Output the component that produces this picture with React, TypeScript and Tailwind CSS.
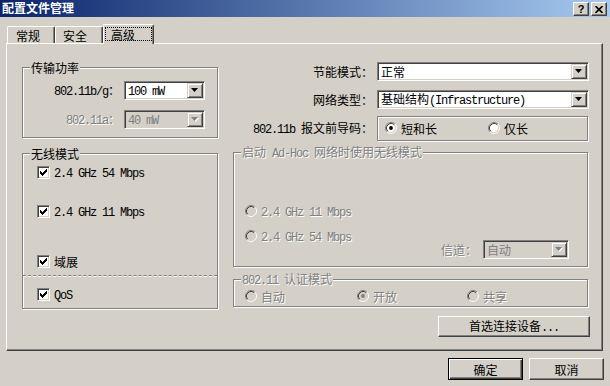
import React from "react";

const CJK = /[\u3000-\u9fff\uff00-\uffef]/;
const RUNS = /[\u3000-\u9fff\uff00-\uffef]+|[^\u3000-\u9fff\uff00-\uffef]+/g;

const DIS = "text-[#808080] [text-shadow:1px_1px_0_#fff]";
const SUNKEN =
  "border border-t-[#808080] border-l-[#808080] border-b-white border-r-white shadow-[inset_1px_1px_0_#404040,inset_-1px_-1px_0_#d4d0c8]";
const RAISED =
  "border border-t-white border-l-white border-b-[#404040] border-r-[#404040] shadow-[inset_-1px_-1px_0_#808080] bg-[#d4d0c8]";
const ETCHED = "border border-[#808080] shadow-[inset_1px_1px_0_#fff,1px_1px_0_#fff]";

function T({ s, className = "" }: { s: string; className?: string }) {
  const parts = s.match(RUNS) || [];
  return (
    <span className={"whitespace-pre leading-[14px] " + className}>
      {parts.map((p, i) =>
        CJK.test(p) ? (
          <span key={i} className="font-['Noto_Sans_CJK_SC',sans-serif] text-[12px]">
            {p}
          </span>
        ) : (
          <span key={i} className="font-['Liberation_Mono',monospace] text-[12px] tracking-[-1.2px]">
            {p}
          </span>
        )
      )}
    </span>
  );
}

function DropBtn({ disabled }: { disabled?: boolean }) {
  return (
    <div className="w-[16px] h-full shrink-0 flex items-center justify-center bg-[#d4d0c8] border border-t-[#d4d0c8] border-l-[#d4d0c8] border-b-[#404040] border-r-[#404040] shadow-[inset_1px_1px_0_#fff,inset_-1px_-1px_0_#808080]">
      <svg width="8" height="5" viewBox="0 0 8 5">
        {disabled && <polygon points="1,1 8,1 4.5,5" fill="#fff" />}
        <polygon points="0,0 7,0 3.5,4" fill={disabled ? "#808080" : "#000"} />
      </svg>
    </div>
  );
}

function Combo({ value, w, disabled }: { value: string; w: string; disabled?: boolean }) {
  return (
    <div className={`${w} h-[19px] flex p-[1px] ${SUNKEN} ${disabled ? "bg-[#d4d0c8]" : "bg-white"}`}>
      <div className="flex-1 flex items-center pl-[2px]">
        <T s={value} className={disabled ? "text-[#808080]" : "text-black"} />
      </div>
      <DropBtn disabled={disabled} />
    </div>
  );
}

function Check() {
  return (
    <div className={`w-[13px] h-[13px] shrink-0 bg-white ${SUNKEN} flex items-center justify-center`}>
      <svg width="7" height="7" viewBox="0 0 7 7" shapeRendering="crispEdges">
        <rect x="6" y="0" width="1" height="1" fill="#000" />
        <rect x="5" y="1" width="2" height="1" fill="#000" />
        <rect x="0" y="2" width="1" height="1" fill="#000" />
        <rect x="4" y="2" width="3" height="1" fill="#000" />
        <rect x="0" y="3" width="2" height="1" fill="#000" />
        <rect x="3" y="3" width="3" height="1" fill="#000" />
        <rect x="0" y="4" width="5" height="1" fill="#000" />
        <rect x="1" y="5" width="3" height="1" fill="#000" />
        <rect x="2" y="6" width="1" height="1" fill="#000" />
      </svg>
    </div>
  );
}

function Radio({ checked, disabled }: { checked?: boolean; disabled?: boolean }) {
  return (
    <svg width="12" height="12" viewBox="0 0 12 12" className="shrink-0">
      <circle cx="6" cy="6" r="4.5" fill={disabled ? "#d4d0c8" : "#fff"} />
      <path d="M2.11 9.89 A5.5 5.5 0 0 1 9.89 2.11" fill="none" stroke="#808080" strokeWidth="1" />
      <path d="M9.89 2.11 A5.5 5.5 0 0 1 2.11 9.89" fill="none" stroke="#fff" strokeWidth="1" />
      <path d="M2.82 9.18 A4.5 4.5 0 0 1 9.18 2.82" fill="none" stroke="#404040" strokeWidth="1" />
      <path d="M9.18 2.82 A4.5 4.5 0 0 1 2.82 9.18" fill="none" stroke="#d4d0c8" strokeWidth="1" />
      {checked && <circle cx="6" cy="6" r="1.9" fill={disabled ? "#808080" : "#000"} />}
    </svg>
  );
}

function Group({
  label,
  disabled,
  className = "",
  children,
}: {
  label: string;
  disabled?: boolean;
  className?: string;
  children?: React.ReactNode;
}) {
  return (
    <div className={`relative ${ETCHED} ${className}`}>
      <div className="absolute top-[-8px] left-[7px] px-[1px] bg-[#d4d0c8] flex h-[14px] items-center">
        <T s={label} className={disabled ? DIS : "text-black"} />
      </div>
      {children}
    </div>
  );
}

function CheckRow({ label }: { label: string }) {
  return (
    <div className="flex items-center h-[13px] pl-[14px]">
      <Check />
      <T s={label} className="ml-[4px] text-black" />
    </div>
  );
}

function RadioItem({
  label,
  checked,
  disabled,
  className = "",
}: {
  label: string;
  checked?: boolean;
  disabled?: boolean;
  className?: string;
}) {
  return (
    <div className={`flex items-center h-[12px] ${className}`}>
      <Radio checked={checked} disabled={disabled} />
      <T s={label} className={`ml-[4px] ${disabled ? DIS : "text-black"}`} />
    </div>
  );
}

function Tab({ label, className }: { label: string; className: string }) {
  return (
    <div
      className={`h-[17px] flex items-center border-t border-l border-t-white border-l-white border-r border-r-[#404040] shadow-[inset_-1px_0_0_#808080] rounded-tl-[2px] rounded-tr-[2px] ${className}`}
    >
      <T s={label} className="text-black" />
    </div>
  );
}

export default function App() {
  return (
    <div className="w-[610px] h-[386px] overflow-hidden bg-[#d4d0c8] flex flex-col">
      {/* Title bar */}
      <div className="h-[17px] shrink-0 flex items-start bg-[linear-gradient(to_right,#0a246a,#a6caf0)] pl-[2px] pr-[3px]">
        <span className="mt-[1px] text-white font-bold text-[12px] leading-[14px] font-['Noto_Sans_CJK_SC',sans-serif]">
          配置文件管理
        </span>
        <div className="ml-auto mt-[2px] flex gap-[2px]">
          <div className={`w-[16px] h-[14px] flex items-center justify-center ${RAISED}`}>
            <span className="text-[11px] leading-[11px] font-bold font-['Liberation_Sans',sans-serif] text-black">?</span>
          </div>
          <div className={`w-[16px] h-[14px] flex items-center justify-center ${RAISED}`}>
            <svg width="8" height="7" viewBox="0 0 8 7">
              <path d="M0.5 0 L7.5 7 M7.5 0 L0.5 7" stroke="#000" strokeWidth="1.6" />
            </svg>
          </div>
        </div>
      </div>

      {/* Tabs */}
      <div className="mt-[7px] h-[19px] shrink-0 flex items-end pl-[7px] relative z-10">
        <Tab label="常规" className="w-[48px] pl-[8px] pt-[1px]" />
        <Tab label="安全" className="w-[48px] pl-[7px] pt-[1px]" />
        <div className="w-[51px] h-[20px] -mb-[1px] bg-[#d4d0c8] flex items-start pt-[2px] pl-[1px] border-t border-l border-t-white border-l-white border-r border-r-[#404040] shadow-[inset_-1px_0_0_#808080] rounded-tl-[2px] rounded-tr-[2px]">
          <div className="w-[47px] h-[14px] border border-dotted border-black flex items-center pl-[5px]">
            <T s="高级" className="text-black" />
          </div>
        </div>
      </div>

      {/* Panel */}
      <div className="ml-[6px] w-[597px] h-[308px] shrink-0 border-t border-l border-t-white border-l-white border-r border-b border-r-[#404040] border-b-[#404040] shadow-[inset_-1px_-1px_0_#808080] flex pl-[15px]">
        {/* Left column */}
        <div className="w-[196px] mt-[23px] flex flex-col">
          <Group label="传输功率" className="h-[71px] pt-[13px] flex flex-col">
            <div className="flex items-center justify-end pr-[12px]">
              <T s="802.11b/g：" className="text-black" />
              <div className="ml-[4px]">
                <Combo value="100 mW" w="w-[81px]" />
              </div>
            </div>
            <div className="mt-[10px] flex items-center justify-end pr-[12px]">
              <T s="802.11a：" className={DIS} />
              <div className="ml-[4px]">
                <Combo value="40 mW" w="w-[81px]" disabled />
              </div>
            </div>
          </Group>

          <Group label="无线模式" className="mt-[15px] h-[156px] pt-[12px] flex flex-col">
            <CheckRow label="2.4 GHz 54 Mbps" />
            <div className="mt-[26px]">
              <CheckRow label="2.4 GHz 11 Mbps" />
            </div>
            <div className="mt-[37px]">
              <CheckRow label="域展" />
            </div>
            <div className="mt-[7px] border-t border-dashed border-t-[#808080] border-b border-b-white" />
            <div className="mt-[11px]">
              <CheckRow label="QoS" />
            </div>
          </Group>
        </div>

        {/* Right column */}
        <div className="w-[356px] ml-[15px] mt-[18px] flex flex-col">
          <div className="flex items-center">
            <div className="w-[140px] flex justify-end">
              <T s="节能模式：" className="text-black" />
            </div>
            <div className="ml-[4px]">
              <Combo value="正常" w="w-[212px]" />
            </div>
          </div>
          <div className="mt-[9px] flex items-center">
            <div className="w-[140px] flex justify-end">
              <T s="网络类型：" className="text-black" />
            </div>
            <div className="ml-[4px]">
              <Combo value="基础结构(Infrastructure)" w="w-[212px]" />
            </div>
          </div>
          <div className="mt-[7px] flex items-center">
            <div className="w-[140px] flex justify-end">
              <T s="802.11b 报文前导码：" className="text-black" />
            </div>
            <div className={`ml-[4px] w-[211px] h-[25px] ${ETCHED} pt-[5px] pl-[7px] flex items-start`}>
              <RadioItem label="短和长" checked className="w-[103px]" />
              <RadioItem label="仅长" />
            </div>
          </div>

          <Group
            label="启动 Ad-Hoc 网络时使用无线模式"
            disabled
            className="mt-[11px] w-[355px] h-[115px] flex flex-col justify-end pb-[7px]"
          >
            <div className="flex items-end">
              <div className="flex flex-col gap-[13px] pl-[11px] mb-[17px]">
                <RadioItem label="2.4 GHz 11 Mbps" disabled />
                <RadioItem label="2.4 GHz 54 Mbps" disabled />
              </div>
              <div className="ml-auto mr-[18px] flex items-center">
                <T s="信道：" className={DIS} />
                <div className="ml-[6px]">
                  <Combo value="自动" w="w-[86px]" disabled />
                </div>
              </div>
            </div>
          </Group>

          <Group
            label="802.11 认证模式"
            disabled
            className="mt-[12px] w-[355px] h-[28px] pt-[10px] pl-[11px] flex items-start"
          >
            <RadioItem label="自动" disabled className="w-[112px]" />
            <RadioItem label="开放" checked disabled className="w-[110px]" />
            <RadioItem label="共享" disabled />
          </Group>

          <div className="mt-[9px] self-end -mr-[1px]">
            <div className={`w-[152px] h-[21px] flex items-center justify-center ${RAISED}`}>
              <T s="首选连接设备..." className="text-black" />
            </div>
          </div>
        </div>
      </div>

      {/* Bottom buttons */}
      <div className="mt-[7px] flex justify-end gap-[6px] pr-[6px]">
        <div className="w-[75px] h-[22px] border border-black bg-[#d4d0c8] shadow-[inset_1px_1px_0_#fff,inset_-1px_-1px_0_#404040,inset_-2px_-2px_0_#808080] flex items-center justify-center">
          <T s="确定" className="text-black" />
        </div>
        <div className={`w-[75px] h-[22px] flex items-center justify-center ${RAISED}`}>
          <T s="取消" className="text-black" />
        </div>
      </div>
    </div>
  );
}
